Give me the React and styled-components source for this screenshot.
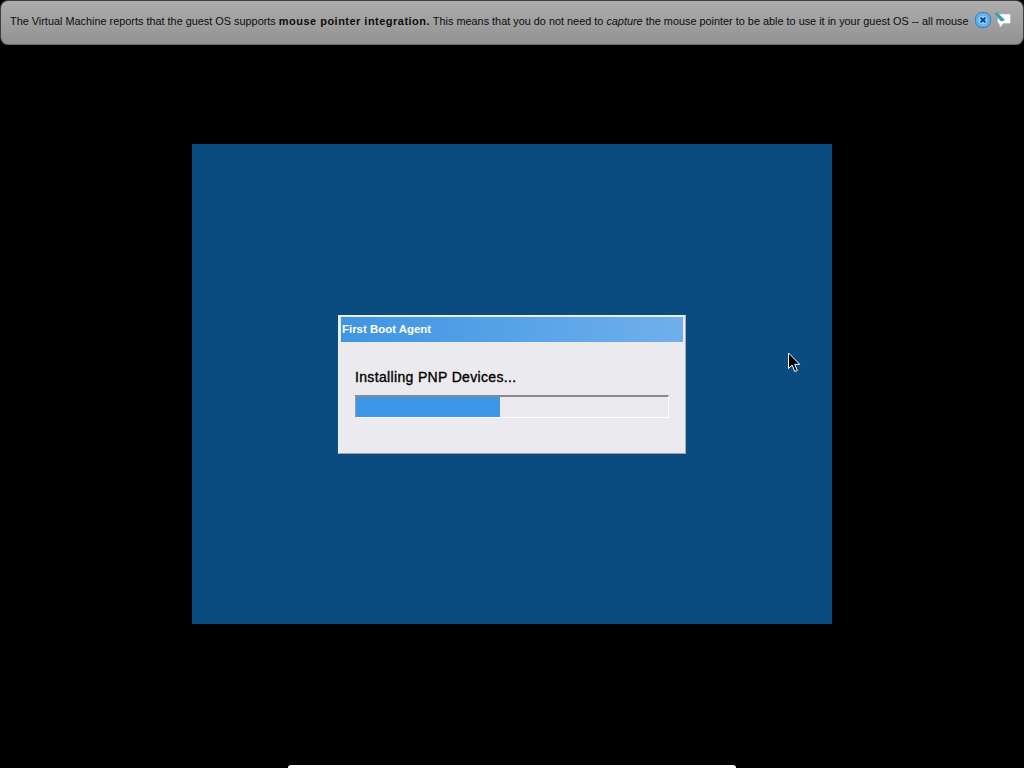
import React from "react";
import styled, { createGlobalStyle } from "styled-components";

const GlobalStyle = createGlobalStyle`
  html, body {
    margin: 0;
    padding: 0;
    background: #000;
    overflow: hidden;
  }
`;

const Page = styled.div`
  width: 1024px;
  height: 768px;
  background: #000;
  display: flex;
  flex-direction: column;
  align-items: center;
  overflow: hidden;
`;

const Banner = styled.div`
  box-sizing: border-box;
  width: 1024px;
  height: 45px;
  padding: 0 12px 3px 9px;
  display: flex;
  align-items: center;
  justify-content: space-between;
  background: linear-gradient(#adadad, #929292);
  border: 1px solid #3e3e3e;
  border-bottom-color: #6a6a6a;
  border-radius: 8px;
  font-family: "Liberation Sans", Arial, sans-serif;
  font-size: 10.88px;
  color: #0c0c0c;
  white-space: nowrap;
`;

const Message = styled.span`
  b {
    font-size: 11px;
    letter-spacing: 0.48px;
    font-weight: 700;
  }
  i {
    font-style: italic;
  }
`;

const BannerIcons = styled.div`
  display: flex;
  align-items: center;
  gap: 3px;
  flex-shrink: 0;
  margin-bottom: 2px;
`;

const Screen = styled.div`
  width: 640px;
  height: 480px;
  margin-top: 99px;
  background: #0b4c80;
  display: flex;
  align-items: center;
  justify-content: center;
  position: relative;
`;

const Dialog = styled.div`
  box-sizing: border-box;
  width: 348px;
  height: 139px;
  margin-top: 1px;
  padding: 1px 2px 2px;
  background: #ebebef;
  border: 1px solid #eef1f5;
  border-right-color: #a9afb8;
  border-bottom-color: #9aa0a8;
  display: flex;
  flex-direction: column;
`;

const TitleBar = styled.div`
  height: 25px;
  padding: 0 0 1px 1px;
  box-sizing: border-box;
  display: flex;
  align-items: center;
  background: linear-gradient(90deg, #3f95e3, #6fb0ec);
  color: #fff;
  font-family: "Liberation Sans", Arial, sans-serif;
  font-size: 11.45px;
  font-weight: 700;
`;

const Body = styled.div`
  padding: 26px 14px 0;
  display: flex;
  flex-direction: column;
  gap: 9px;
`;

const Status = styled.div`
  font-family: "Liberation Sans", Arial, sans-serif;
  font-size: 14px;
  line-height: 18px;
  letter-spacing: 0.34px;
  color: #000;
  -webkit-text-stroke: 0.35px #000;
`;

const Progress = styled.div`
  box-sizing: border-box;
  width: 314px;
  height: 23px;
  background: #ebebef;
  border-top: 2px solid #8a8a8c;
  border-left: 1px solid #9a9a9c;
  border-right: 1px solid #fff;
  border-bottom: 1px solid #fff;
`;

const ProgressFill = styled.div`
  height: 100%;
  background: #3c97e8;
`;

const Pointer = styled.svg`
  position: absolute;
  left: 595px;
  top: 208px;
`;

const PeekBar = styled.div`
  width: 448px;
  height: 3px;
  margin-top: auto;
  background: #fff;
  border-radius: 6px 6px 0 0;
`;

const CloseIcon = () => (
  <svg width="16" height="16" viewBox="0 0 16 16">
    <rect x="0.5" y="0.5" width="15" height="15" rx="6" fill="#5cb0f0" stroke="#3a7cb8" />
    <circle cx="8" cy="8" r="4.6" fill="#8fcdf6" />
    <path d="M5.6 5.6l4.8 4.8M10.4 5.6l-4.8 4.8" stroke="#17408f" strokeWidth="2" />
  </svg>
);

const BubbleIcon = () => (
  <svg width="17" height="16" viewBox="0 0 17 16">
    <path d="M4 2h12.5v9.5h-7l-3.5 4-1-4-1.5-1z" fill="#fbfdfe" stroke="#9db2be" strokeWidth="0.5" />
    <path d="M0.5 1.5l2.5-1.2 8 7.7-4 1.4z" fill="#3f9ab8" />
  </svg>
);

const App = () => {
  const progress = 144;

  return (
    <Page>
      <GlobalStyle />
      <Banner>
        <Message>
          The Virtual Machine reports that the guest OS supports{" "}
          <b>mouse pointer integration.</b> This means that you do not need to{" "}
          <i>capture</i> the mouse pointer to be able to use it in your guest OS -- all mouse
        </Message>
        <BannerIcons>
          <CloseIcon />
          <BubbleIcon />
        </BannerIcons>
      </Banner>
      <Screen>
        <Dialog>
          <TitleBar>First Boot Agent</TitleBar>
          <Body>
            <Status>Installing PNP Devices...</Status>
            <Progress>
              <ProgressFill style={{ width: progress }} />
            </Progress>
          </Body>
        </Dialog>
        <Pointer width="14" height="22" viewBox="0 0 14 22">
          <path d="M1.5 1v15.5l3.6-3.4 2.6 6.4 2.6-1-2.6-6.2h5z" fill="#000" stroke="#fff" strokeWidth="1" />
        </Pointer>
      </Screen>
      <PeekBar />
    </Page>
  );
};

export default App;
